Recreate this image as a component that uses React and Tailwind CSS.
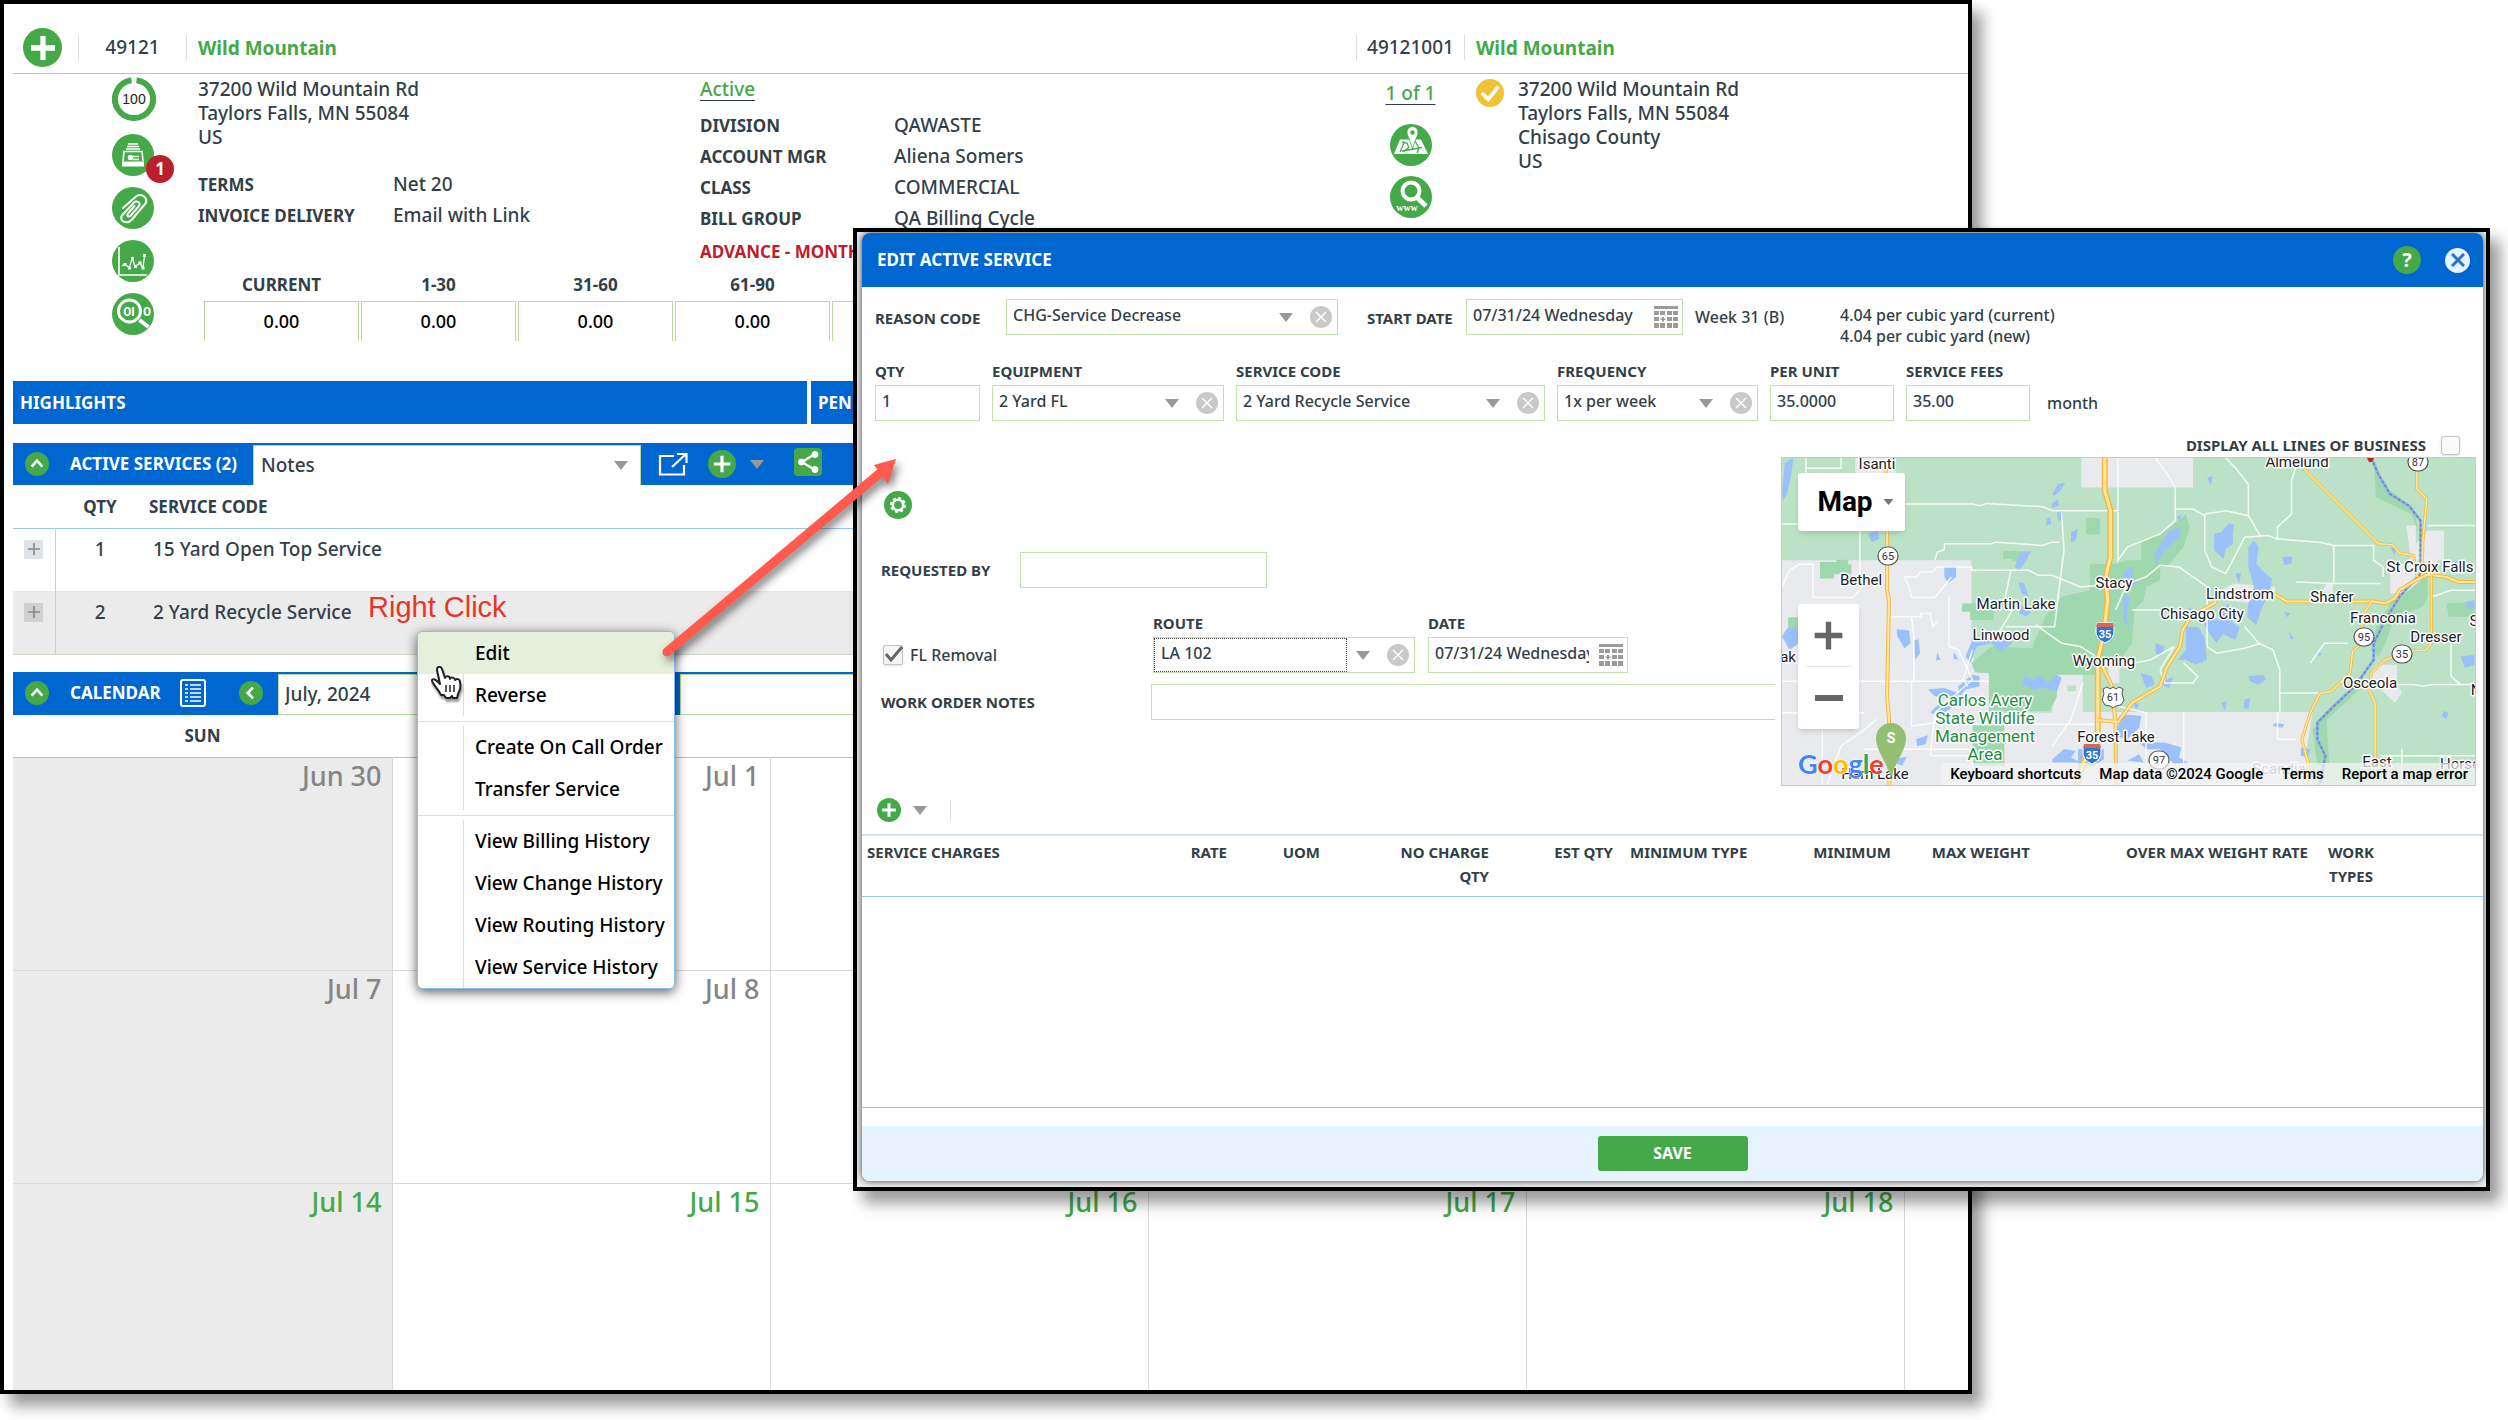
import { useState } from "react";

const agingBuckets = [
  { label: "CURRENT", amount: "0.00" },
  { label: "1-30", amount: "0.00" },
  { label: "31-60", amount: "0.00" },
  { label: "61-90", amount: "0.00" },
  { label: "", amount: "" },
];

const accountInfo = [
  ["DIVISION", "QAWASTE"],
  ["ACCOUNT MGR", "Aliena Somers"],
  ["CLASS", "COMMERCIAL"],
  ["BILL GROUP", "QA Billing Cycle"],
];

const services = [
  { qty: 1, name: "15 Yard Open Top Service", active: false },
  { qty: 2, name: "2 Yard Recycle Service", active: true },
];

const weeks = [
  { days: ["Jun 30", "Jul 1", "", "", "", ""], height: "h-[213px]", color: "text-[#858585]" },
  { days: ["Jul 7", "Jul 8", "", "", "", ""], height: "h-[213px]", color: "text-[#858585]" },
  { days: ["Jul 14", "Jul 15", "Jul 16", "Jul 17", "Jul 18", ""], height: "h-[206px]", color: "text-[#45a849]" },
];

const menuGroups = [
  ["Edit", "Reverse"],
  ["Create On Call Order", "Transfer Service"],
  ["View Billing History", "View Change History", "View Routing History", "View Service History"],
];

const towns = [
  ["Isanti", 95, 6],
  ["Almelund", 515, 4],
  ["Bethel", 79, 122],
  ["Stacy", 332, 125],
  ["Martin Lake", 234, 146],
  ["Linwood", 219, 177],
  ["Lindstrom", 458, 136],
  ["Shafer", 550, 139],
  ["St Croix Falls", 648, 109],
  ["Chisago City", 420, 156],
  ["Franconia", 601, 160],
  ["Dresser", 654, 179],
  ["Wyoming", 322, 203],
  ["Osceola", 588, 225],
  ["Forest Lake", 334, 279],
  ["East", 595, 304],
  ["Horse", 678, 306],
  ["Ham Lake", 93, 316],
  ["ak", 6, 199],
  ["S", 692, 163],
  ["N", 694, 232],
];

const stateRoutes = [
  ["65", 106, 98],
  ["97", 377, 302],
  ["95", 582, 179],
  ["35", 620, 196],
  ["87", 636, 4],
];

/* ---------- icons ---------- */

const Plus = ({ className, width = 3 }) => (
  <svg viewBox="0 0 24 24" className={className} fill="none" stroke="currentColor" strokeWidth={width}>
    <path d="M12 3v18M3 12h18" />
  </svg>
);

const Chevron = ({ className, d }) => (
  <svg viewBox="0 0 24 24" className={className} fill="none" stroke="currentColor" strokeWidth="4">
    <path d={d} />
  </svg>
);

const Caret = () => (
  <svg viewBox="0 0 14 9" className="h-[9px] w-[14px] shrink-0" fill="#999">
    <path d="M0 0h14L7 9z" />
  </svg>
);

const CalendarGrid = () => (
  <svg viewBox="0 0 24 22" className="h-[22px] w-[24px]" fill="#9b9b9b">
    <path d="M0 0h24v3H0zM0 5h5v4H0zM6 5h5v4H6zM13 5h5v4h-5zM19 5h5v4h-5zM0 11h5v4H0zM8 11h2v1.500h1.500v1.500H10v1.500H8V14H6.500v-1.500H8zM13 11h5v4h-5zM19 11h5v4h-5zM0 17h5v5H0zM6 17h5v5H6zM13 17h5v5h-5zM19 17h5v5h-5z" />
  </svg>
);

const ScoreRing = () => (
  <svg viewBox="0 0 44 44" className="mb-[2px] size-[44px]">
    <path d="M24.500 3.200A19 19 0 1 1 19.500 3.200" fill="none" stroke="#45a849" strokeWidth="6" />
    <text x="22" y="27" textAnchor="middle" fontSize="14" fill="#222" fontFamily="Liberation Sans, sans-serif">
      100
    </text>
  </svg>
);

const InvoiceIcon = () => (
  <svg viewBox="0 0 42 42" className="size-[42px]" fill="none" stroke="#fff">
    <path d="M16 10h10M15 12.500h12M14 15h14" strokeWidth="1.500" />
    <path d="M11 27l1-9.500h18l1 9.500" strokeWidth="1.600" />
    <circle cx="18.500" cy="23.500" r="2.800" fill="#fff" stroke="none" />
    <path d="M21 22.500h6M21 25.500h6" strokeWidth="1.500" />
    <path d="M10 27.500h22v5H10z" fill="#fff" stroke="none" />
  </svg>
);

const ClipIcon = () => (
  <svg viewBox="0 0 42 42" className="size-[42px]" fill="none" stroke="#fff" strokeWidth="2" strokeLinecap="round">
    <path d="M11 21L24 9.500c5-4 12.500 1 9.500 7L20 32.500c-4 4.500-12.500 3-10.500-3.500L22 15.500c3-2.500 7 0 5 3.500L18.500 29c-2 1.500-4-.5-3-2l7-8" />
  </svg>
);

const ChartIcon = () => (
  <svg viewBox="0 0 42 42" className="size-[42px]" fill="none" stroke="#fff">
    <path d="M7 7v28h28" strokeWidth="1.600" />
    <path d="M10 26l3-2 4 4 3.500-10L23 27l5-4 3 5 1.500-12" strokeWidth="1.200" />
    <path d="M11.500 23h3v3h-3zM16 26.500h3v3h-3zM19 17h3v3h-3zM22 25h3v3h-3zM26.500 21.500h3v3h-3zM29.500 26.500h3v3h-3zM31 14h3v3h-3z" fill="#fff" stroke="none" />
  </svg>
);

const AuditIcon = () => (
  <svg viewBox="0 0 42 42" className="size-[42px]">
    <circle cx="17.500" cy="18" r="11" fill="none" stroke="#fff" strokeWidth="3" />
    <path d="M27.500 27l9 7" stroke="#fff" strokeWidth="4" />
    <text x="17" y="22.500" textAnchor="middle" fontSize="12" fontWeight="700" fill="#fff" fontFamily="Inter, sans-serif">
      0I
    </text>
    <text x="35" y="22.500" textAnchor="middle" fontSize="12" fontWeight="700" fill="#fff" fontFamily="Inter, sans-serif">
      0
    </text>
  </svg>
);

const MapPinIcon = () => (
  <svg viewBox="0 0 42 42" className="size-[42px]">
    <path d="M10 15.500h21L38 30H4z" fill="#fff" />
    <path d="M12 18l5 1 2 5M10 28l4-9M12 27l20-3.500M25 17l4 7-2 5M19 23l-5 5" fill="none" stroke="#45a849" strokeWidth="1.300" />
    <path d="M22.500 2.500c3.200 0 5.500 2.500 5.500 5.500 0 3.500-3 8-5.500 17-2.500-9-5.500-13.500-5.500-17 0-3 2.300-5.500 5.500-5.500z" fill="#fff" stroke="#45a849" strokeWidth=".8" />
    <circle cx="22.500" cy="8.500" r="2.200" fill="#45a849" />
  </svg>
);

const WebSearchIcon = () => (
  <svg viewBox="0 0 42 42" className="size-[42px]">
    <circle cx="21" cy="15" r="8.500" fill="none" stroke="#fff" strokeWidth="4" />
    <path d="M27 21.500l9 8.500" stroke="#fff" strokeWidth="5" />
    <text x="17" y="35" textAnchor="middle" fontSize="10" fontWeight="700" fill="#fff" fontFamily="Liberation Serif, serif">
      www
    </text>
  </svg>
);

const GearIcon = () => (
  <svg viewBox="0 0 28 28" className="size-[28px]">
    <circle cx="14" cy="14" r="5.200" fill="none" stroke="#fff" strokeWidth="2.600" />
    <circle cx="14" cy="14" r="7" fill="none" stroke="#fff" strokeWidth="2" strokeDasharray="3 2.498" />
  </svg>
);

/* ---------- shared controls ---------- */

const RoundButton = ({ label, className, children }) => (
  <button type="button" aria-label={label} className={`flex shrink-0 items-center justify-center rounded-full bg-[#45a849] text-white ${className}`}>
    {children}
  </button>
);

const ClearButton = () => (
  <button type="button" aria-label="Clear" className="mr-[5px] ml-[17px] flex size-[22px] shrink-0 items-center justify-center rounded-full bg-[#c9c9c9] text-white">
    <svg viewBox="0 0 12 12" className="size-[12px]" fill="none" stroke="currentColor" strokeWidth="1.500">
      <path d="M1 1l10 10M11 1L1 11" />
    </svg>
  </button>
);

const Combo = ({ id, value, focused }) => (
  <div className="flex h-9 items-center border border-[#bfe3ab] bg-white">
    <select
      id={id}
      className={`h-full min-w-0 flex-1 appearance-none bg-white pb-1 pl-[6px] font-medium outline-none ${focused ? "border border-dotted border-[#444]" : ""}`}
    >
      <option>{value}</option>
    </select>
    <span className="ml-[9px] flex">
      <Caret />
    </span>
    <ClearButton />
  </div>
);

const TextField = ({ id, defaultValue = "" }) => (
  <input id={id} type="text" defaultValue={defaultValue} className="h-9 w-full border border-[#bfe3ab] bg-white pb-1 pl-[6px] font-medium outline-none" />
);

const DateField = ({ id, defaultValue }) => (
  <div className="flex h-9 items-center border border-[#bfe3ab] bg-white">
    <input id={id} type="text" defaultValue={defaultValue} className="ml-[6px] h-full min-w-0 flex-1 bg-white pb-1 font-medium outline-none" />
    <button type="button" aria-label="Pick date" className="mr-1 ml-[10px] shrink-0">
      <CalendarGrid />
    </button>
  </div>
);

const Field = ({ id, label, className, children }) => (
  <div className={className}>
    <label htmlFor={id} className="mb-1 block text-[15px] leading-5 font-bold">
      {label}
    </label>
    {children}
  </div>
);

/* ---------- account page ---------- */

const AccountHeader = () => (
  <header className="flex h-[70px] border-b border-[#9cc8f5] pt-[18px]">
    <div className="flex flex-1 items-center">
      <RoundButton label="Add" className="ml-[10px] size-[39px]">
        <Plus className="size-[32px]" width={4} />
      </RoundButton>
      <div className="ml-4 flex h-[25px] w-[109px] items-center justify-center border-x border-[#ddd] pb-px text-[19px]">49121</div>
      <h1 className="mt-[2px] ml-[11px] text-[19px] font-bold text-[#45a849]">Wild Mountain</h1>
    </div>
    <div className="flex w-[612px] items-center">
      <div className="flex h-[25px] w-[109px] items-center justify-center border-x border-[#ddd] pb-px text-[19px]">49121001</div>
      <h2 className="mt-[2px] ml-[11px] text-[19px] font-bold text-[#45a849]">Wild Mountain</h2>
    </div>
  </header>
);

const AccountSummary = () => (
  <section className="flex h-[267px] pt-[3px] text-[19px] leading-6">
    <div className="flex w-[185px] flex-col items-start gap-[11px] pl-[99px]">
      <ScoreRing />
      <RoundButton label="Invoices" className="relative size-[42px]">
        <InvoiceIcon />
        <span className="absolute top-[21px] left-[34px] flex size-[28px] items-center justify-center rounded-full bg-[#bb1e2d] text-[17px] font-bold">1</span>
      </RoundButton>
      <RoundButton label="Attachments" className="size-[42px]">
        <ClipIcon />
      </RoundButton>
      <RoundButton label="Trends" className="size-[42px]">
        <ChartIcon />
      </RoundButton>
      <RoundButton label="Audit" className="size-[42px]">
        <AuditIcon />
      </RoundButton>
    </div>

    <div className="flex-1">
      <div className="flex">
        <div className="w-[502px]">
          <address className="not-italic">
            37200 Wild Mountain Rd
            <br />
            Taylors Falls, MN 55084
            <br />
            US
          </address>
          <dl className="mt-5 grid grid-cols-[195px_1fr] leading-[31px]">
            <dt className="text-[17px] font-bold">TERMS</dt>
            <dd>Net 20</dd>
            <dt className="text-[17px] font-bold">INVOICE DELIVERY</dt>
            <dd>Email with Link</dd>
          </dl>
        </div>
        <div>
          <a href="#status" className="text-[#45a849] underline decoration-[#333f48] underline-offset-4">
            Active
          </a>
          <dl className="mt-[9px] grid grid-cols-[194px_1fr] leading-[31px]">
            {accountInfo.map(([label, value]) => (
              <div key={label} className="contents">
                <dt className="text-[17px] font-bold">{label}</dt>
                <dd>{value}</dd>
              </div>
            ))}
          </dl>
          <p className="text-[17px] leading-[35px] font-bold text-[#bb1e2d]">ADVANCE - MONTHLY</p>
        </div>
      </div>

      <table className="ml-1 table-fixed border-separate border-spacing-x-[2px] border-spacing-y-0">
        <thead>
          <tr className="h-8">
            {agingBuckets.map((b, i) => (
              <th key={i} className="w-[155px] p-0 text-[17px] font-bold">
                {b.label}
              </th>
            ))}
          </tr>
        </thead>
        <tbody>
          <tr className="h-10">
            {agingBuckets.map((b, i) => (
              <td key={i} className="border border-b-0 border-[#b5dba0] p-0 pb-[2px] text-center text-[18px] text-black">
                {b.amount}
              </td>
            ))}
          </tr>
        </tbody>
      </table>
    </div>

    <div className="flex w-[612px]">
      <div className="flex w-[109px] flex-col items-center gap-[10px] pt-1">
        <a href="#sites" className="mb-[9px] text-[#45a849] underline decoration-[#333f48] underline-offset-4">
          1 of 1
        </a>
        <RoundButton label="Map" className="size-[42px]">
          <MapPinIcon />
        </RoundButton>
        <RoundButton label="Web lookup" className="size-[42px]">
          <WebSearchIcon />
        </RoundButton>
      </div>
      <span className="mt-[2px] ml-[11px] flex size-[28px] items-center justify-center rounded-full bg-[#f0c334] text-white">
        <Chevron className="size-[22px]" d="M3 12l7 7L21 5" />
      </span>
      <address className="ml-[14px] not-italic">
        37200 Wild Mountain Rd
        <br />
        Taylors Falls, MN 55084
        <br />
        Chisago County
        <br />
        US
      </address>
    </div>
  </section>
);

const ActiveServices = () => (
  <section className="mt-[19px]">
    <div className="flex h-[42px] items-center bg-[#0066d0] text-white">
      <RoundButton label="Collapse" className="ml-3 size-[24px]">
        <Chevron className="size-[16px]" d="M4 16l8-9 8 9" />
      </RoundButton>
      <h2 className="w-[204px] pl-[21px] text-[17px] font-bold">ACTIVE SERVICES (2)</h2>
      <div className="mt-[2px] flex h-10 w-[388px] items-center border border-b-0 border-[#b5dba0] bg-white pr-[12px] text-[#333f48]">
        <select aria-label="Notes filter" className="h-full flex-1 appearance-none bg-white pl-[7px] text-[19px] font-medium outline-none">
          <option>Notes</option>
        </select>
        <Caret />
      </div>
      <button type="button" aria-label="Open in new window" className="ml-[17px]">
        <svg viewBox="0 0 30 24" className="h-[24px] w-[30px]" fill="none" stroke="#fff" strokeWidth="2.200">
          <path d="M16 4H2v18.500h24V13M14 15L28 2M19 2h9.500v9" />
        </svg>
      </button>
      <RoundButton label="Add service" className="mr-[14px] ml-5 size-[28px]">
        <Plus className="size-[22px]" width={3.5} />
      </RoundButton>
      <Caret />
      <button type="button" aria-label="Share" className="mb-1 ml-[30px] flex size-[28px] items-center justify-center rounded-[4px] bg-[#45a849]">
        <svg viewBox="0 0 24 24" className="size-[24px]" fill="#fff" stroke="#fff">
          <path d="M19 4L6 12l13 8" fill="none" strokeWidth="2.500" />
          <circle cx="19" cy="4.500" r="3" />
          <circle cx="5.500" cy="12" r="3" />
          <circle cx="19" cy="19.500" r="3" />
        </svg>
      </button>
    </div>

    <table className="w-full table-fixed border-collapse text-left">
      <colgroup>
        <col className="w-[42px]" />
        <col className="w-[90px]" />
        <col />
      </colgroup>
      <thead>
        <tr className="h-[43px] border-b border-[#9cc8f5] text-[17px]">
          <th aria-label="Expand"></th>
          <th className="p-0 text-center font-bold">QTY</th>
          <th className="p-0 pl-1 font-bold">SERVICE CODE</th>
        </tr>
      </thead>
      <tbody>
        {services.map((s) => (
          <tr key={s.qty} className={`h-[63px] border-b align-top text-[19px] leading-6 ${s.active ? "border-[#ccd8c8] bg-[#ebebeb]" : "border-[#e3e9e3]"}`}>
            <td className="border-r border-[#ccc] p-0 pt-[11px] pl-[11px]">
              <button type="button" aria-label="Expand row" className={`flex size-[19px] items-center justify-center text-[#888] ${s.active ? "bg-[#d0d0d2]" : "bg-[#dfe3e8]"}`}>
                <Plus className="size-[16px]" width={2.5} />
              </button>
            </td>
            <td className="p-0 pt-2 text-center">{s.qty}</td>
            <td className="p-0 pt-2 pl-2">{s.name}</td>
          </tr>
        ))}
      </tbody>
    </table>
  </section>
);

const Calendar = () => (
  <section className="mt-[17px]">
    <div className="flex h-[43px] items-center bg-[#0066d0] text-white">
      <RoundButton label="Collapse" className="ml-3 size-[24px]">
        <Chevron className="size-[16px]" d="M4 16l8-9 8 9" />
      </RoundButton>
      <h2 className="w-[131px] pl-[21px] text-[17px] font-bold">CALENDAR</h2>
      <button type="button" aria-label="List view">
        <svg viewBox="0 0 26 28" className="h-[28px] w-[26px]" fill="none" stroke="#fff" strokeWidth="2">
          <rect x="1" y="1" width="24" height="26" rx="2" />
          <path d="M5 6h3M5 10h3M5 14h3M5 18h3M5 22h3M10 6h11M10 10h11M10 14h11M10 18h11M10 22h11" strokeWidth="1.600" />
        </svg>
      </button>
      <RoundButton label="Previous month" className="mr-[15px] ml-[33px] size-[24px]">
        <Chevron className="size-[16px]" d="M15 4l-8 8 8 8" />
      </RoundButton>
      <input aria-label="Month" defaultValue="July, 2024" className="mt-[2px] h-[41px] w-[396px] border border-[#b5dba0] bg-white pl-[6px] text-[19px] font-medium text-[#333f48] outline-none" />
      <div className="mt-[2px] ml-[6px] h-[41px] flex-1 border border-[#b5dba0] bg-white" />
    </div>

    <table className="w-full table-fixed border-collapse">
      <colgroup>
        <col className="w-[379px]" />
        <col className="w-[378px]" />
        <col className="w-[378px]" />
        <col className="w-[378px]" />
        <col className="w-[378px]" />
        <col />
      </colgroup>
      <thead>
        <tr className="h-[43px] border-b border-[#9cc8f5]">
          <th className="p-0 text-[17px] font-bold">SUN</th>
          <th colSpan={5} aria-label="Weekdays"></th>
        </tr>
      </thead>
      <tbody>
        {weeks.map((week) => (
          <tr key={week.days[0]} className={`border-b border-[#d8d8d8] align-top last:border-b-0 ${week.height} ${week.color}`}>
            {week.days.map((day, i) => (
              <td key={i} className="border-r border-[#d8d8d8] p-0 pt-[2px] pr-[10px] text-right text-[27px] leading-8 first:bg-[#ebebeb] last:border-r-0">
                {day}
              </td>
            ))}
          </tr>
        ))}
      </tbody>
    </table>
  </section>
);

const ContextMenu = () => (
  <ul className="absolute top-[631px] left-[417px] w-[258px] overflow-hidden rounded-[6px] border border-[#8bbdf5] bg-white text-[19px] text-black shadow-[0_3px_12px_rgba(0,0,0,0.65)]">
    {menuGroups.map((group, g) => (
      <li key={g} className="border-t border-[#ddd] pt-1 pb-[5px] first:border-t-0 first:pt-0 last:pb-0">
        <ul>
          {group.map((item) => (
            <li key={item} className={item === "Edit" ? "bg-[#e4f0dc]" : "bg-white"}>
              <button type="button" className="flex h-[42px] w-full items-center text-left font-medium whitespace-nowrap">
                <span className={`h-full w-[46px] shrink-0 border-r ${item === "Edit" ? "border-transparent" : "border-[#ddd]"}`} />
                <span className="pl-[11px]">{item}</span>
              </button>
            </li>
          ))}
        </ul>
      </li>
    ))}
  </ul>
);

/* ---------- service area map ---------- */

const MapTerrain = () => (
  <svg viewBox="24 81 1477 987" preserveAspectRatio="none" className="absolute inset-0 h-full w-full">
    <rect x="24" y="81" width="1477" height="987" fill="#bbe2c6" />
    <g fill="#e8eaed">
      <path d="M24 390H428V660L440 730H465V850H600V735H665V848H1155L1142 960L1155 1068H24z" />
      <path d="M662 81H900V170H662zM180 81H265V130H180zM1355 285H1375V340L1400 300H1435V390H1420V430H1385V490H1320V400H1365z" />
      <path d="M1290 705H1335V760L1345 790L1330 820L1300 780L1270 775zM960 480L985 460L1075 470V500L1030 520L970 510zM1185 460H1198V500H1240V520H1160zM715 470H745V540H725zM720 690H743V760H720z" />
    </g>
    <g fill="#9fd8ae">
      <path d="M428 700L470 650L560 655V640L585 560L620 500L680 480V400H735L760 390H790V330L830 310L860 280L885 250L893 290L880 350L850 400L830 410V450L800 470L795 510L775 540L770 640L745 690H700V735H610V800L595 845H465V730L435 728z" />
      <path d="M672 262H702V312H672zM105 395H140V388H165V402H172V432H135V445H105zM408 520H440V528H475V570H425V545H408zM495 362H545V392H515V385H495zM37 562H60V618H37zM430 888H498V1010H430z" />
      <path d="M1320 520L1360 480L1385 450V420H1400V500L1390 530L1330 560L1310 640L1295 680L1280 660L1290 590zM1155 900L1200 830L1260 740L1270 760L1240 800L1185 870L1190 1000L1165 1010zM1285 81L1310 170L1370 230L1380 300L1365 250L1290 200zM1440 520L1500 515V560H1445z" />
      <path d="M632 768H650V785H632zM445 850H462V862H445z" fill="#bbe2c6" />
    </g>
    <g fill="#9cc0f9">
      <path d="M24 180L30 95L48 81L45 120L35 190L26 210zM208 310L228 300L232 325L215 335zM370 410L395 408V440L378 458L370 440zM24 620L35 595L60 590V640L40 660zM268 598L295 602L298 640L285 655L270 620zM305 632L315 628L318 670L308 690zM355 668L362 690L352 692z" />
      <path d="M520 410L530 370L555 360L545 390L530 420zM415 680L430 630L450 620L500 605L515 640L490 665L470 640L440 650L425 700zM390 665L400 690L390 688zM335 780L370 775L400 790L390 810L350 800zM400 770L430 735L445 740L445 770L415 780L400 810zM360 820L390 830L360 860L340 850zM310 930L335 918L330 945L312 950zM265 990L290 982L280 1010L262 1000z" />
      <path d="M540 740L560 750L575 735L590 760L610 735L620 745L610 785L585 775L560 780L535 765zM600 190L612 160L628 155L618 180L605 195zM598 220L612 205L614 225L600 232zM610 245L622 240V270L612 270zM588 265L597 260V280L588 285zM640 305L655 295L650 330L640 335zM527 455L540 460L550 500L535 490zM530 530L545 525L555 545L545 560L530 550z" />
      <path d="M835 330L850 300L875 290L870 320L840 360L820 405L818 370zM945 310L960 305L975 280L988 282L985 310L985 340L970 355L965 385L945 360zM865 260L875 250L872 275zM755 420L772 410L770 440L778 460L760 480L750 450zM750 490L765 500L758 560L765 600L752 570zM1018 350L1030 330L1040 350L1035 400L1055 430L1068 445L1065 480L1045 540L1035 585L1015 560L1018 520L1030 470L1018 410zM990 430L1003 428L998 460zM960 540L975 520L985 580L1000 590L990 630L968 615L955 600zM930 555L955 570L965 610L950 640L935 610L922 580zM885 590L912 592L925 625L930 690L905 705L885 690L868 690L885 660zM880 555L895 530L905 560L890 575zM820 640L840 650L830 680L820 670zM788 730L812 740L818 765L800 775zM835 755L858 742L850 775L838 770zM1090 380L1112 378L1110 400L1095 405z" />
      <path d="M735 900L755 855L790 860L785 895L760 930L735 920zM600 990L625 960L650 965L640 985L662 1000H600zM655 960H710V990L690 1010H655zM785 940H840L875 955L870 985L890 1000L860 1005L830 960L800 960zM760 995L785 975L795 1000zM770 820L785 822L780 840zM1010 810L1022 805L1018 840L1008 835zM960 820L972 815L968 845zM1018 740L1050 735L1055 750L1040 765L1020 755zM1075 880L1095 885L1090 895L1070 890zM1470 680L1500 675V705L1480 715zM1480 515L1500 510V535H1485zM1455 390L1470 395L1460 402zM1435 845L1445 850L1440 870L1430 860zM1320 350L1332 355L1330 375zM930 140L942 135L938 165zM1095 545L1108 550L1100 562zM1105 605L1115 625L1108 630zM1160 665L1175 670L1170 680zM1130 955L1150 960L1145 985L1130 980z" />
    </g>
    <g fill="none" stroke="#fff" strokeWidth="1.500">
      {[
        "M24 280H70L75 250V81M75 112H150V81M24 470L40 420L60 402H90V502H175L190 480V300",
        "M285 220H430L445 225L460 218L580 228L600 240H740V81M620 245L625 360L615 470L605 590H500",
        "M350 390L355 365L370 358V340H470L480 335L580 345L600 335H615M285 440H310L320 425H345L355 410H428V420H550L570 435H600L660 470L700 465",
        "M285 440L295 470L300 502H350M250 560H320V550H340L345 590L355 575M24 755H250M250 755H465M120 1068L150 950L200 900L225 870M300 560L305 620V755",
        "M512 420L500 500L515 540L490 600L460 620M565 585L620 640L660 650L705 690M350 502L385 440M380 502V650L400 660L430 750L350 850L340 980H430",
        "M740 245V390L760 350L830 310L862 270V170L845 130L820 81M735 540L760 460L800 440L830 405L870 410L930 470V650",
        "M862 235H900L925 255V360L940 410L970 430L1010 320L1060 315L1080 325V290L1110 250V150L1125 81M1018 255V160L990 110L970 81M925 250L970 240L1018 255L1045 320",
        "M770 540H880M1075 325L1170 335L1200 345V460L1120 455M1200 345H1285V390L1305 410V440M1400 285H1501M1200 460H1300",
        "M1010 590L1040 640L1070 660L1085 720V850M930 650L950 670L1010 655L1045 640M775 700L810 690L860 650M860 650L830 720L840 760H900L910 740L880 700M1085 790H1170M1290 765H1370L1390 770L1410 765H1501",
        "M1410 500L1450 480H1501M1450 640V740L1470 765M1300 980H1501M1345 1068V960M665 760L640 870L600 950M428 885H690M740 830L800 850V1068M880 848V1068M1080 848V930H1120",
        "M24 850H200M110 850V1068M200 960H430V1068M300 755V890L350 880M1150 700L1180 640L1230 640M430 660L410 750L420 770",
      ].map((d) => (
        <path key={d} d={d} vectorEffect="non-scaling-stroke" strokeOpacity=".85" />
      ))}
    </g>
    <path d="M1280 81L1295 130L1320 190L1360 225L1385 270V430L1340 500L1310 570L1285 640V690L1245 770L1200 830L1165 880V930L1182 980L1170 1068" fill="none" stroke="#8fb6e8" strokeWidth="3" vectorEffect="non-scaling-stroke" />
    <path d="M1280 81L1295 130L1320 190L1360 225L1385 270V430L1340 500L1310 570L1285 640V690L1245 770L1200 830L1165 880V930L1182 980L1170 1068" fill="none" stroke="#7581b5" strokeWidth="1.500" strokeDasharray="3 2" vectorEffect="non-scaling-stroke" />
    {[
      { w: 4, d: "M245 115L248 300V480L252 510L248 800L252 870L253 1068" },
      { w: 6, d: "M712 81V180L724 240V380L714 440L718 510L710 610L697 690V935L672 980L652 1068" },
      { w: 4, d: "M700 690L726 765L735 880L736 1068M697 872L740 878L770 820L830 770L845 710L872 650L878 600L895 560L945 520L962 480" },
      { w: 4, d: "M1068 488L1100 514H1285L1310 520L1330 505L1340 480L1375 450L1400 433L1440 440L1465 455H1501" },
      { w: 3, d: "M1130 105L1295 340L1325 343L1340 368L1370 375L1378 440M1377 110V175L1398 205L1390 330L1388 435M1408 435V640L1395 662H1360L1310 690L1280 730L1275 780L1288 820V1068" },
      { w: 3, d: "M1280 515L1260 560V640L1240 665L1235 730L1195 785L1170 792L1150 850L1132 930L1145 1000V1068" },
    ].map((road) => (
      <g key={road.d} fill="none" strokeLinejoin="round">
        <path d={road.d} stroke="#f5b83d" strokeWidth={road.w} vectorEffect="non-scaling-stroke" />
        <path d={road.d} stroke="#fde7a0" strokeWidth={road.w / 2} vectorEffect="non-scaling-stroke" />
      </g>
    ))}
  </svg>
);

const InterstateShield = ({ x, y }) => (
  <g transform={`translate(${x} ${y})`}>
    <path d="M-8-10H8L9-4Q10 6 0 10Q-10 6-9-4z" fill="#3275c9" stroke="#fff" />
    <path d="M-8-10H8L9-6H-9z" fill="#d8645c" />
    <text y="5" textAnchor="middle" fontSize="11" fontWeight="700" fill="#fff">
      35
    </text>
  </g>
);

const MapLabels = () => (
  <svg className="absolute inset-0 h-full w-full" fontFamily="Roboto, sans-serif" fontWeight="400">
    {stateRoutes.map(([route, x, y]) => (
      <g key={`${route}-${x}`}>
        <rect x={x - 10} y={y - 9} width="20" height="18" rx="9" fill="#fff" stroke="#555" strokeWidth="1.200" />
        <text x={x} y={y + 4} textAnchor="middle" fontSize="11" fill="#333">
          {route}
        </text>
      </g>
    ))}
    <InterstateShield x={323} y={175} />
    <InterstateShield x={310} y={296} />
    <path d="M321 231l4-2 3 2 3-2 3 2 3-2 4 2-1 5 2 6-3 5-5 1-3 2-3-2-5-1-3-5 2-6z" fill="#fff" stroke="#555" />
    <text x="331" y="243" textAnchor="middle" fontSize="11" fill="#333">
      61
    </text>
    <path d="M585 0h7l-2 4h-3z" fill="#c5221f" />
    <g fontSize="15" fill="#202124" stroke="#fff" strokeWidth="3" strokeLinejoin="round" style={{ paintOrder: "stroke" }}>
      {towns.map(([town, x, y]) => (
        <text key={town} x={x} y={y + 5} textAnchor="middle">
          {town}
        </text>
      ))}
      <text x="497" y="316" textAnchor="middle" fill="#8a8d91">
        Scandia
      </text>
      <g fill="#1e8e3e" fontSize="17">
        <text x="203" y="248" textAnchor="middle">Carlos Avery</text>
        <text x="203" y="266" textAnchor="middle">State Wildlife</text>
        <text x="203" y="284" textAnchor="middle">Management</text>
        <text x="203" y="302" textAnchor="middle">Area</text>
      </g>
    </g>
    <path d="M109 322C107 306 94 294 94 280a15 15 0 0 1 30 0C124 294 111 306 109 322z" fill="#94bf72" />
    <text x="109" y="285" textAnchor="middle" fontSize="14" fontWeight="700" fill="#fff">
      S
    </text>
    <text x="16" y="316" fontSize="27" fontWeight="700" fontFamily="Lato, sans-serif" stroke="#fff" strokeWidth="1" style={{ paintOrder: "stroke" }}>
      <tspan fill="#4285f4">G</tspan>
      <tspan fill="#ea4335">o</tspan>
      <tspan fill="#fbbc04">o</tspan>
      <tspan fill="#4285f4">g</tspan>
      <tspan fill="#34a853">l</tspan>
      <tspan fill="#ea4335">e</tspan>
    </text>
  </svg>
);

const ServiceMap = () => (
  <div className="relative h-[329px] overflow-hidden border border-[#a9d0f5] font-[Roboto,sans-serif] text-black">
    <MapTerrain />
    <MapLabels />
    <button type="button" className="absolute top-[15px] left-4 flex h-[58px] w-[107px] items-center justify-center gap-[10px] rounded-[3px] bg-white pl-2 text-[28px] font-bold shadow-md">
      Map
      <svg viewBox="0 0 10 6" className="h-[6px] w-[11px]" fill="#777">
        <path d="M0 0h10L5 6z" />
      </svg>
    </button>
    <div className="absolute top-[146px] left-4 flex h-[125px] w-[61px] flex-col items-center rounded-[3px] bg-white text-[#666] shadow-md">
      <button type="button" aria-label="Zoom in" className="flex w-[46px] flex-1 items-center justify-center border-b border-[#e6e6e6]">
        <Plus className="size-[37px]" width={3.5} />
      </button>
      <button type="button" aria-label="Zoom out" className="flex w-[46px] flex-1 items-center justify-center">
        <span className="h-[6px] w-[28px] bg-[#666]" />
      </button>
    </div>
    <div className="absolute right-0 bottom-0 flex h-[22px] items-center gap-[18px] bg-[#f5f5f5]/70 pr-[7px] pl-[9px] text-[15px] font-medium whitespace-nowrap">
      <button type="button">Keyboard shortcuts</button>
      <span>Map data ©2024 Google</span>
      <a href="#terms">Terms</a>
      <a href="#report">Report a map error</a>
    </div>
  </div>
);

/* ---------- edit dialog ---------- */

const EditServiceDialog = () => {
  const [flRemoval, setFlRemoval] = useState(true);

  return (
    <div className="absolute top-[228px] right-[18px] left-[853px] border-4 border-black bg-[#ececec] pt-px pr-[3px] pb-[6px] pl-[5px] shadow-[10px_12px_14px_rgba(0,0,0,0.4)]">
      <div role="dialog" aria-label="Edit active service" className="rounded-[8px] bg-white text-[16px] shadow-[0_0_7px_rgba(0,0,0,0.75)]">
        <div className="flex h-[54px] items-center rounded-t-[8px] bg-[#0066d0] px-[15px] text-white">
          <h2 className="flex-1 text-[17px] font-bold">EDIT ACTIVE SERVICE</h2>
          <RoundButton label="Help" className="mr-6 size-[28px] text-[20px] font-bold">
            ?
          </RoundButton>
          <button type="button" aria-label="Close" className="-mr-[2px] flex size-[25px] items-center justify-center rounded-full bg-[#e6f2fe] text-[#2a74c9]">
            <svg viewBox="0 0 14 14" className="size-[14px]" fill="none" stroke="currentColor" strokeWidth="3">
              <path d="M1 1l12 12M13 1L1 13" />
            </svg>
          </button>
        </div>

        <div className="flex h-[61px] px-[13px] pt-3">
          <label htmlFor="reason" className="w-[131px] text-[15px] leading-[38px] font-bold">
            REASON CODE
          </label>
          <div className="w-[332px]">
            <Combo id="reason" value="CHG-Service Decrease" />
          </div>
          <label htmlFor="start" className="ml-[29px] w-[99px] text-[15px] leading-[38px] font-bold">
            START DATE
          </label>
          <div className="w-[217px]">
            <DateField id="start" defaultValue="07/31/24 Wednesday" />
          </div>
          <span className="ml-3 w-[145px] leading-[36px]">Week 31 (B)</span>
          <p className="mt-[6px] leading-[21px]">
            4.04 per cubic yard (current)
            <br />
            4.04 per cubic yard (new)
          </p>
        </div>

        <div className="flex items-end gap-3 px-[13px] pt-[13px]">
          <Field id="qty" label="QTY" className="w-[105px]">
            <TextField id="qty" defaultValue="1" />
          </Field>
          <Field id="equipment" label="EQUIPMENT" className="w-[232px]">
            <Combo id="equipment" value="2 Yard FL" />
          </Field>
          <Field id="service" label="SERVICE CODE" className="w-[309px]">
            <Combo id="service" value="2 Yard Recycle Service" />
          </Field>
          <Field id="frequency" label="FREQUENCY" className="w-[201px]">
            <Combo id="frequency" value="1x per week" />
          </Field>
          <Field id="unit" label="PER UNIT" className="w-[124px]">
            <TextField id="unit" defaultValue="35.0000" />
          </Field>
          <Field id="fees" label="SERVICE FEES" className="w-[124px]">
            <TextField id="fees" defaultValue="35.00" />
          </Field>
          <span className="pl-[5px] leading-[36px]">month</span>
        </div>

        <div className="flex gap-[6px] pr-[7px]">
          <div className="flex-1 pt-[70px] pl-[19px]">
            <RoundButton label="Settings" className="ml-[3px] size-[28px]">
              <GearIcon />
            </RoundButton>
            <div className="mt-[33px] flex items-center">
              <label htmlFor="requested" className="w-[139px] text-[15px] font-bold">
                REQUESTED BY
              </label>
              <div className="w-[247px]">
                <TextField id="requested" />
              </div>
            </div>
            <div className="mt-[25px] flex items-end gap-[13px]">
              <div className="flex h-9 w-[259px] items-center gap-[7px] pl-[2px]">
                <span className="relative flex size-[20px]">
                  <input
                    id="fl"
                    type="checkbox"
                    checked={flRemoval}
                    onChange={(e) => setFlRemoval(e.target.checked)}
                    className="size-[20px] appearance-none rounded-[2px] border border-[#c4c4c4] bg-[#f5f5f5] shadow-sm"
                  />
                  {flRemoval && (
                    <svg viewBox="0 0 20 20" className="pointer-events-none absolute inset-0" fill="none" stroke="#666" strokeWidth="3">
                      <path d="M3 9l5 6L19 2" />
                    </svg>
                  )}
                </span>
                <label htmlFor="fl">FL Removal</label>
              </div>
              <Field id="route" label="ROUTE" className="w-[262px]">
                <Combo id="route" value="LA 102" focused />
              </Field>
              <Field id="date" label="DATE" className="w-[200px]">
                <DateField id="date" defaultValue="07/31/24 Wednesday" />
              </Field>
            </div>
            <div className="mt-[11px] flex items-center">
              <label htmlFor="notes" className="w-[270px] text-[15px] font-bold">
                WORK ORDER NOTES
              </label>
              <input id="notes" type="text" className="h-9 flex-1 border border-r-0 border-[#bfe3ab] outline-none" />
            </div>
          </div>

          <div className="w-[695px]">
            <div className="flex h-9 items-center justify-end gap-[15px] pt-3 pr-4">
              <label htmlFor="lob" className="text-[15px] font-bold">
                DISPLAY ALL LINES OF BUSINESS
              </label>
              <input id="lob" type="checkbox" className="size-[19px] appearance-none rounded-[3px] border border-[#c4c4c4] bg-[#fafafa] shadow-sm" />
            </div>
            <ServiceMap />
          </div>
        </div>

        <div className="flex h-12 items-center pl-[15px]">
          <RoundButton label="Add charge" className="mr-[12px] size-[24px]">
            <Plus className="size-[18px]" width={4} />
          </RoundButton>
          <Caret />
          <span className="ml-[23px] h-[21px] border-l border-[#ddd]" />
        </div>

        <table className="w-full table-fixed border-collapse border-t-2 border-[#cfe5fb]">
          <colgroup>
            <col className="w-[278px]" />
            <col className="w-[93px]" />
            <col className="w-[93px]" />
            <col className="w-[169px]" />
            <col className="w-[124px]" />
            <col className="w-[141px]" />
            <col className="w-[137px]" />
            <col className="w-[139px]" />
            <col className="w-[278px]" />
            <col className="w-[74px]" />
            <col />
          </colgroup>
          <thead>
            <tr className="h-[61px] border-b border-[#9cc8f5] text-right align-top text-[15px] leading-6">
              <th className="p-0 pt-1 pl-[5px] text-left">SERVICE CHARGES</th>
              <th className="p-0 pt-1 pr-[6px]">RATE</th>
              <th className="p-0 pt-1 pr-[6px]">UOM</th>
              <th className="p-0 pt-1 pr-[6px]">
                NO CHARGE
                <br />
                QTY
              </th>
              <th className="p-0 pt-1 pr-[6px]">EST QTY</th>
              <th className="p-0 pt-1 pl-[11px] text-left">MINIMUM TYPE</th>
              <th className="p-0 pt-1 pr-[6px]">MINIMUM</th>
              <th className="p-0 pt-1 pr-[6px]">MAX WEIGHT</th>
              <th className="p-0 pt-1 pr-[6px]">OVER MAX WEIGHT RATE</th>
              <th className="p-0 pt-1 text-center">
                WORK
                <br />
                TYPES
              </th>
              <th aria-label="Actions"></th>
            </tr>
          </thead>
        </table>
        <div className="mb-[18px] h-[211px] border-b border-[#9cc8f5]" />

        <div className="flex h-[55px] items-center justify-center rounded-b-[8px] bg-[#e6f2fe]">
          <button type="button" className="h-[35px] w-[150px] rounded-[3px] bg-[#45a849] text-[16px] font-bold text-white">
            SAVE
          </button>
        </div>
      </div>
    </div>
  );
};

/* Red pointer from the menu entry to the dialog it opens */
const Callout = () => (
  <svg className="pointer-events-none absolute top-[440px] left-[650px] h-[230px] w-[270px] drop-shadow-[3px_5px_4px_rgba(0,0,0,0.5)]">
    <path d="M17 212L229 34" stroke="#ff5a4b" strokeWidth="9" strokeLinecap="round" />
    <path d="M246 19L224 25L238 44z" fill="#ff5a4b" />
  </svg>
);

const HandCursor = () => (
  <svg viewBox="0 0 32 34" className="pointer-events-none absolute top-[666px] left-[430px] h-[34px] w-[32px] drop-shadow-[1px_3px_1px_rgba(0,0,0,0.4)]">
    <path
      d="M7 4c0-4 4-4 5-1l3 9c1-3 5-2 5 1 1-3 5-1 5 1 2-2 5-1 5 2 1 6 0 8-2 12l-1 4h-4l-1-2-2 2h-4l-2-3h-3C9 24 6 22 3 17c-3-4 1-5 4-2l3 3z"
      fill="#fff"
      stroke="#222"
      strokeWidth="2"
      strokeLinejoin="round"
    />
    <path d="M16 19v7M20 19v7M24 19v7" stroke="#222" strokeWidth="1.500" />
  </svg>
);

const App = () => (
  <div className="relative overflow-hidden bg-white pb-[26px] font-['Noto_Sans',sans-serif] font-medium text-[#333f48]">
    <main className="mr-[536px] border-4 border-black bg-white pl-[9px] shadow-[10px_12px_14px_rgba(0,0,0,0.4)]">
      <AccountHeader />
      <AccountSummary />
      <div className="mt-10 flex h-[43px] gap-1 text-[17px] leading-[43px] font-bold text-white">
        <h2 className="w-[794px] bg-[#0066d0] pl-[7px]">HIGHLIGHTS</h2>
        <h2 className="flex-1 bg-[#0066d0] pl-[7px]">PENDING</h2>
      </div>
      <ActiveServices />
      <Calendar />
    </main>
    <EditServiceDialog />
    <ContextMenu />
    <p className="absolute top-[590px] left-[368px] font-['Liberation_Sans',sans-serif] text-[29px] leading-[34px] font-normal text-[#e5372a]">Right Click</p>
    <Callout />
    <HandCursor />
  </div>
);

export default App;
